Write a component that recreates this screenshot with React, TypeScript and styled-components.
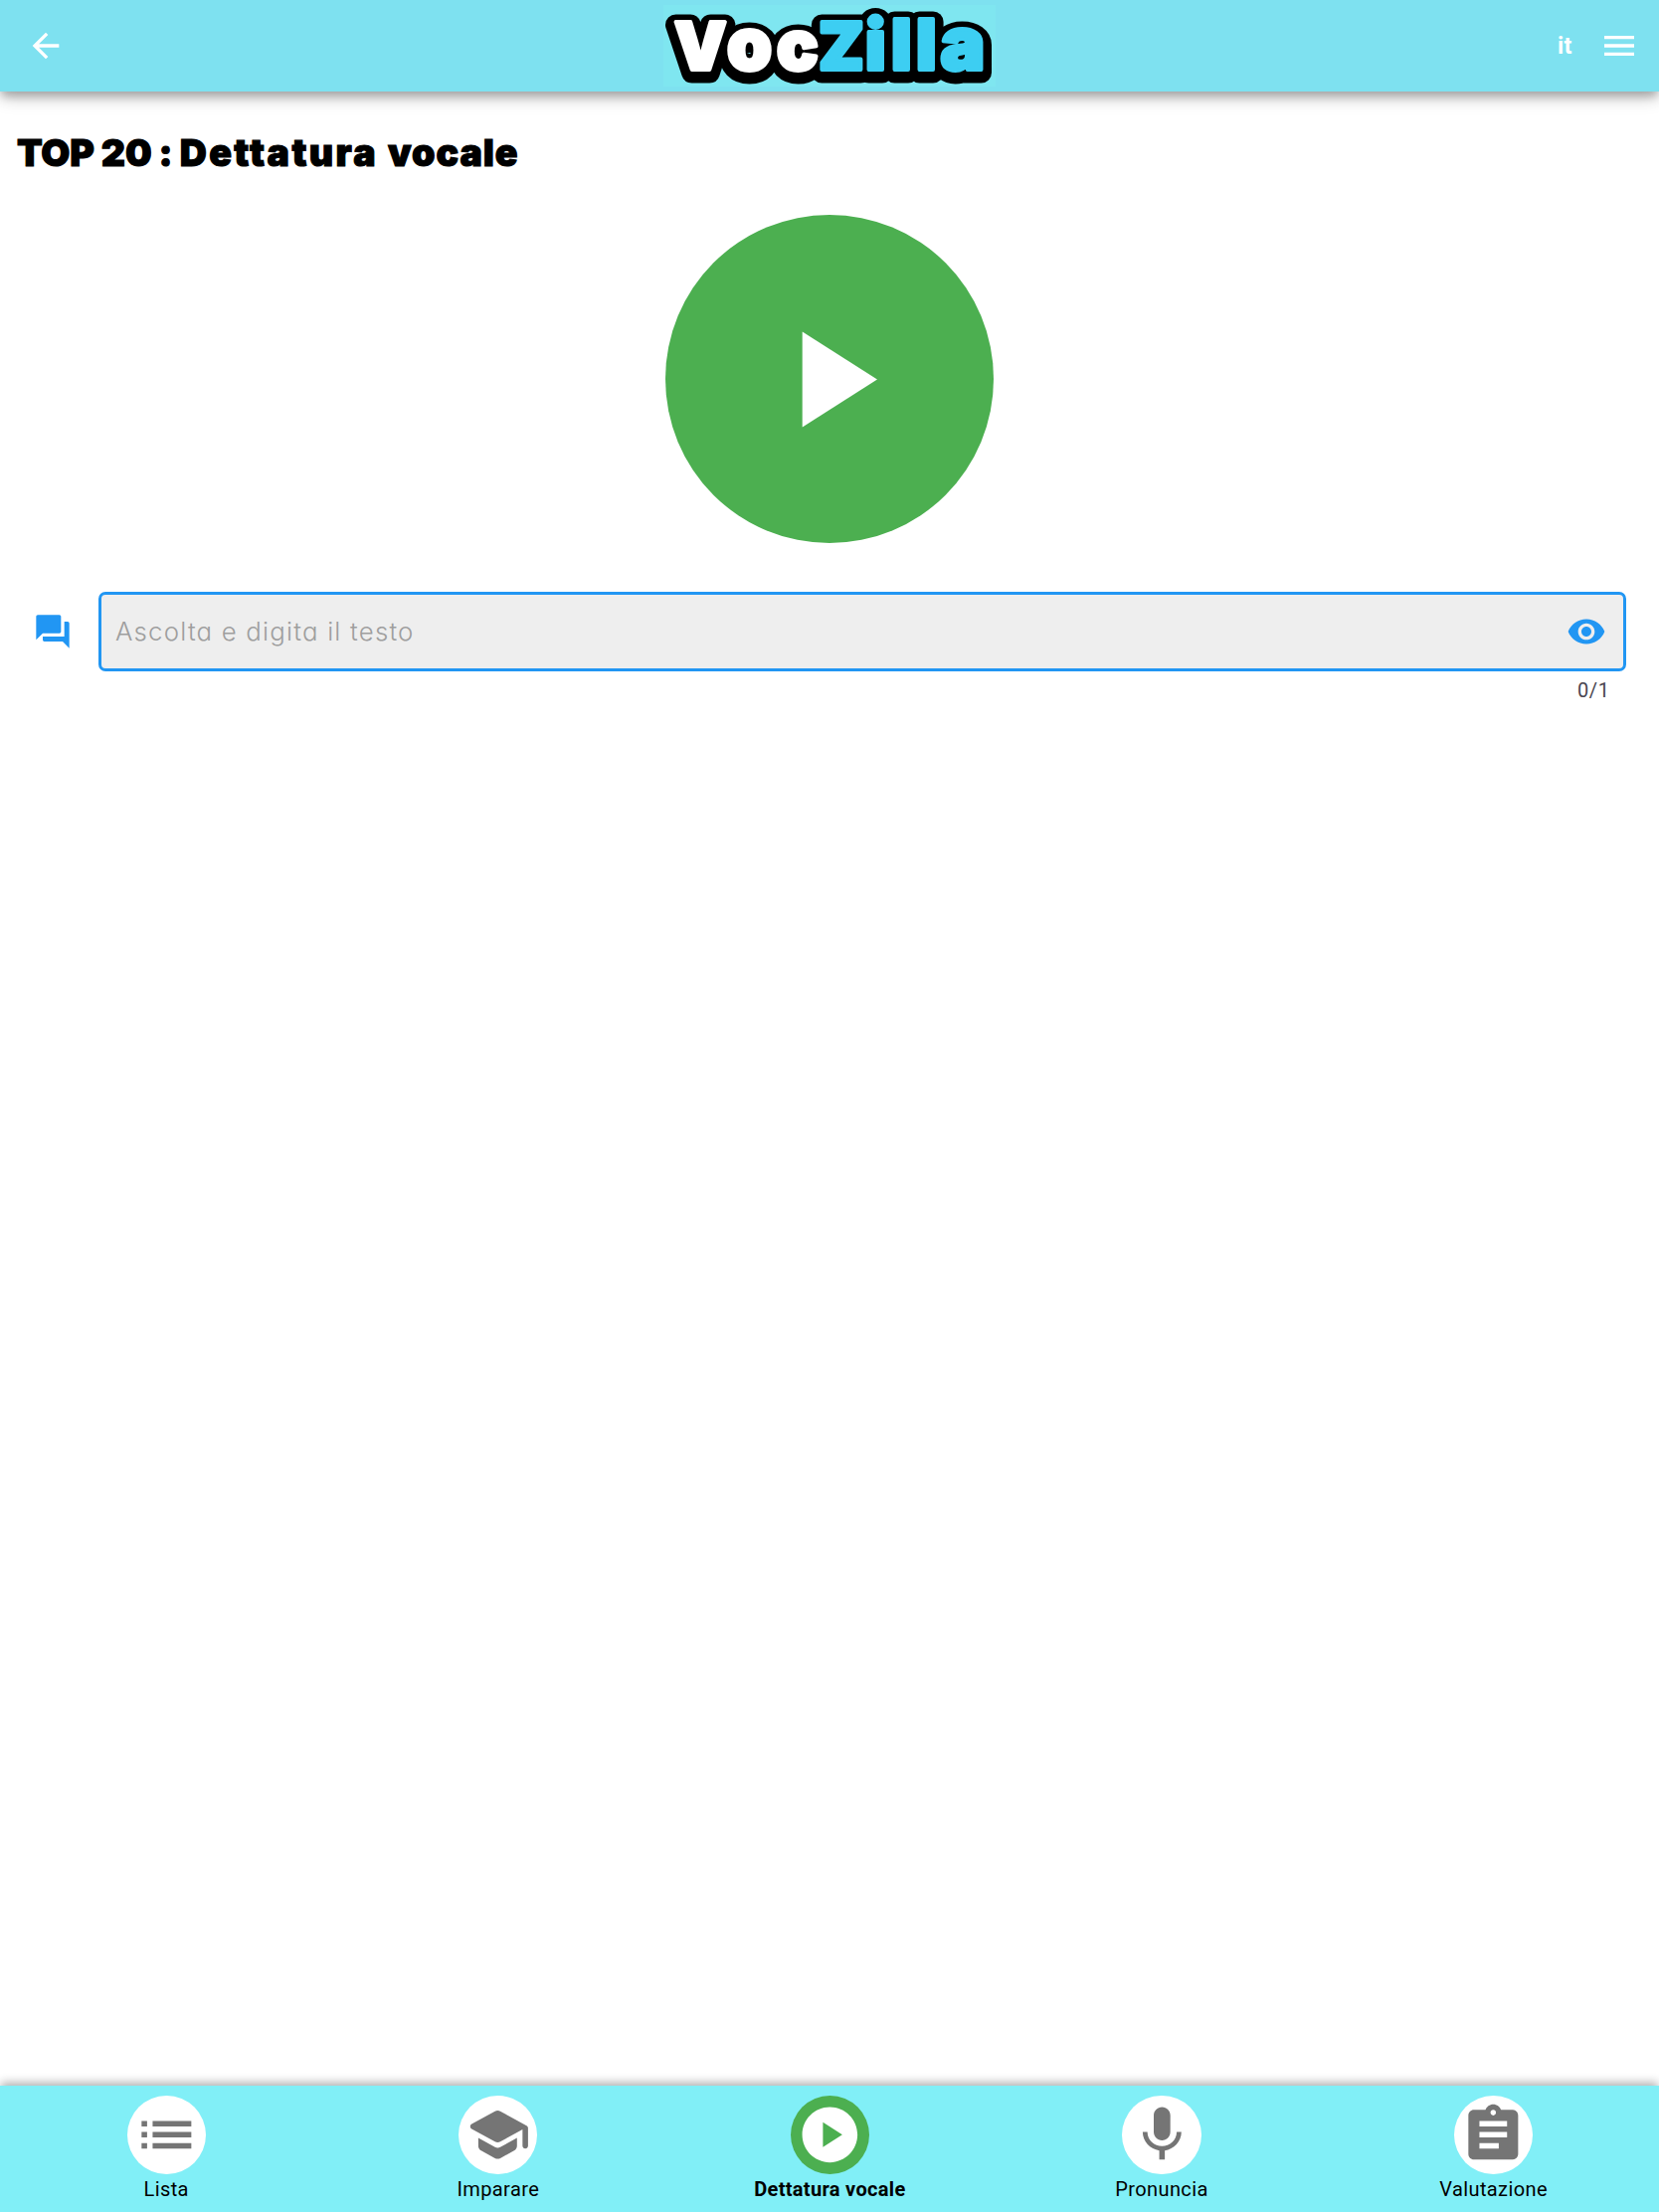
import React from "react";
import styled, { createGlobalStyle } from "styled-components";
import { MdArrowBack, MdAssignment, MdForum, MdList, MdMenu, MdMic, MdRemoveRedEye } from "react-icons/md";

const GlobalStyle = createGlobalStyle`
  * { box-sizing: border-box; }
  body { margin: 0; background: #fff; font-family: Roboto, "Liberation Sans", sans-serif; }
  button { border: 0; padding: 0; background: none; font: inherit; color: inherit; }
`;

const Screen = styled.div`
  display: flex;
  flex-direction: column;
  height: 2224px;
  overflow: hidden;
  background: #fff;
`;

const TopBar = styled.header`
  flex: none;
  height: 92.3px;
  display: grid;
  grid-template-columns: 1fr 334px 1fr;
  align-items: center;
  padding: 0 20px 0 26px;
  background: #7ee1f0;
  color: #fff;
  box-shadow: 0 7px 8px -2px rgba(0, 0, 0, 0.2), 0 7px 17px rgba(0, 0, 0, 0.14), 0 2px 17px rgba(0, 0, 0, 0.12);
`;

const BarButton = styled.button`
  display: flex;
  width: 40px;
  height: 40px;
`;

const BarActions = styled.div`
  display: flex;
  align-items: center;
  justify-content: flex-end;
  gap: 27.5px;
`;

const Language = styled.span`
  font-size: 23.3px;
  font-weight: 700;
  line-height: 28px;
  letter-spacing: 0.2px;
`;

const Logo = styled.svg`
  display: block;
  margin-left: -3px;
  width: 334px;
  height: 82px;
  overflow: visible;
  background: #7fe6f0;
  font-family: Inter, sans-serif;
  font-weight: 900;
  font-size: 72px;
  stroke-linejoin: round;
`;

const Main = styled.main`
  flex: 1;
  display: flex;
  flex-direction: column;
`;

const Title = styled.h1`
  margin: 35.7px 17px 0;
  font: 900 37.5px/52px Inter, sans-serif;
  -webkit-text-stroke: 1.1px #000;
  white-space: nowrap;
  color: #000;
`;

const Word = styled.span<{ $spacing: number }>`
  letter-spacing: ${(p) => p.$spacing}px;
`;

const PlayButton = styled.button`
  align-self: center;
  display: flex;
  margin-top: 36px;
  width: 330px;
  height: 330px;
  border-radius: 50%;
  background: #4caf50;
  color: #fff;
`;

const Entry = styled.div`
  display: flex;
  align-items: center;
  gap: 26px;
  margin: 49.3px 33px 0 33px;
  color: #2196f3;
`;

const Field = styled.label`
  flex: 1;
  display: flex;
  align-items: center;
  height: 79.4px;
  padding: 0 16.6px 0 14px;
  border: 3.33px solid #2196f3;
  border-radius: 7px;
  background: #eee;
`;

const Input = styled.input`
  flex: 1;
  min-width: 0;
  border: 0;
  padding: 0;
  outline: 0;
  background: none;
  font: 350 25.8px/40px Inter, sans-serif;
  font-feature-settings: "cv11";
  letter-spacing: 1.2px;
  &::placeholder { color: #9e9e9e; opacity: 1; }
`;

const Counter = styled.div`
  align-self: flex-end;
  margin: 6px 49.3px 0 0;
  font-size: 20px;
  line-height: 26px;
  letter-spacing: 0.67px;
  color: #49454f;
`;

const BottomBar = styled.nav`
  flex: none;
  display: grid;
  grid-template-columns: repeat(5, 1fr);
  height: 127.3px;
  padding-top: 10px;
  background: #81eff7;
  box-shadow: 0 -4px 9px -1px rgba(0, 0, 0, 0.32);
`;

const Tab = styled.button<{ $active?: boolean }>`
  display: flex;
  flex-direction: column;
  align-items: center;
  padding-left: 0.8px;
  font-size: 20px;
  line-height: 24px;
  font-weight: ${(p) => (p.$active ? 700 : 400)};
  letter-spacing: ${(p) => (p.$active ? 0.32 : 0.4)}px;
  color: #000;
`;

const TabIcon = styled.span<{ $active?: boolean }>`
  display: flex;
  align-items: center;
  justify-content: center;
  width: 79.4px;
  height: 79.4px;
  margin-bottom: 3px;
  border-radius: 50%;
  background: ${(p) => (p.$active ? "#4caf50" : "#fff")};
  color: ${(p) => (p.$active ? "#fff" : "#757575")};
`;

function Wordmark() {
  return (
    <Logo viewBox="0 0 334 82" role="img" aria-label="VocZilla">
      <defs>
        <text id="voc" x="11 64 114" y="64.8">
          <tspan fontSize="66">V</tspan>o<tspan fontSize="69">c</tspan>
        </text>
        <text id="zilla" x="156 203 229 254 278.5" y="64.8">
          <tspan fontSize="66">Z</tspan><tspan fontSize="69.5">ill</tspan><tspan fontSize="75">a</tspan>
        </text>
      </defs>
      <g fill="#000" stroke="#000" strokeWidth="21" transform="translate(0 3.3)">
        <use href="#voc" />
        <use href="#zilla" />
      </g>
      <use href="#voc" fill="#fff" stroke="#fff" strokeWidth="3.8" />
      <use href="#zilla" fill="#3dcef2" stroke="#3dcef2" strokeWidth="3.8" />
    </Logo>
  );
}

const PlayGlyph = () => (
  <svg width="330" height="330" viewBox="0 0 330 330" fill="currentColor">
    <path d="M137.7 117.5v96l75.3-48z" />
  </svg>
);

const SchoolIcon = () => (
  <svg width="66.7" height="66.7" viewBox="0 0 24 24" fill="currentColor">
    <path d="M5 13.18v2.81c0 .73.4 1.41 1.04 1.76l5 2.73c.6.33 1.32.33 1.92 0l5-2.73c.64-.35 1.04-1.03 1.04-1.76v-2.81l-6.04 3.3c-.6.33-1.32.33-1.92 0L5 13.18zm6.04-9.66l-8.43 4.6c-.69.38-.69 1.38 0 1.76l8.43 4.6c.6.33 1.32.33 1.92 0L21 10.09V16c0 .55.45 1 1 1s1-.45 1-1V9.59c0-.37-.2-.7-.52-.88l-9.52-5.19c-.6-.32-1.32-.32-1.92 0z" />
  </svg>
);

const PlayCircleIcon = () => (
  <svg width="66.7" height="66.7" viewBox="0 0 24 24" fill="currentColor">
    <path d="M12 2C6.48 2 2 6.48 2 12s4.48 10 10 10 10-4.48 10-10S17.52 2 12 2zM9.5 16.5v-9l7 4.5-7 4.5z" />
  </svg>
);

const tabs = [
  { label: "Lista", icon: <MdList size={66.7} /> },
  { label: "Imparare", icon: <SchoolIcon /> },
  { label: "Dettatura vocale", icon: <PlayCircleIcon />, active: true },
  { label: "Pronuncia", icon: <MdMic size={66.7} /> },
  { label: "Valutazione", icon: <MdAssignment size={66.7} /> },
];

export default function App() {
  return (
    <Screen>
      <GlobalStyle />
      <TopBar>
        <BarButton><MdArrowBack size={40} /></BarButton>
        <Wordmark />
        <BarActions>
          <Language>it</Language>
          <BarButton><MdMenu size={40} /></BarButton>
        </BarActions>
      </TopBar>
      <Main>
        <Title>
          <Word $spacing={-0.2}>TOP 20 : </Word>
          <Word $spacing={2.4}>Dettatura </Word>
          <Word $spacing={1}>vocale</Word>
        </Title>
        <PlayButton><PlayGlyph /></PlayButton>
        <Entry>
          <MdForum size={40} />
          <Field>
            <Input placeholder="Ascolta e digita il testo" />
            <MdRemoveRedEye size={40} />
          </Field>
        </Entry>
        <Counter>0/1</Counter>
      </Main>
      <BottomBar>
        {tabs.map((t) => (
          <Tab key={t.label} $active={t.active}>
            <TabIcon $active={t.active}>{t.icon}</TabIcon>
            {t.label}
          </Tab>
        ))}
      </BottomBar>
    </Screen>
  );
}
